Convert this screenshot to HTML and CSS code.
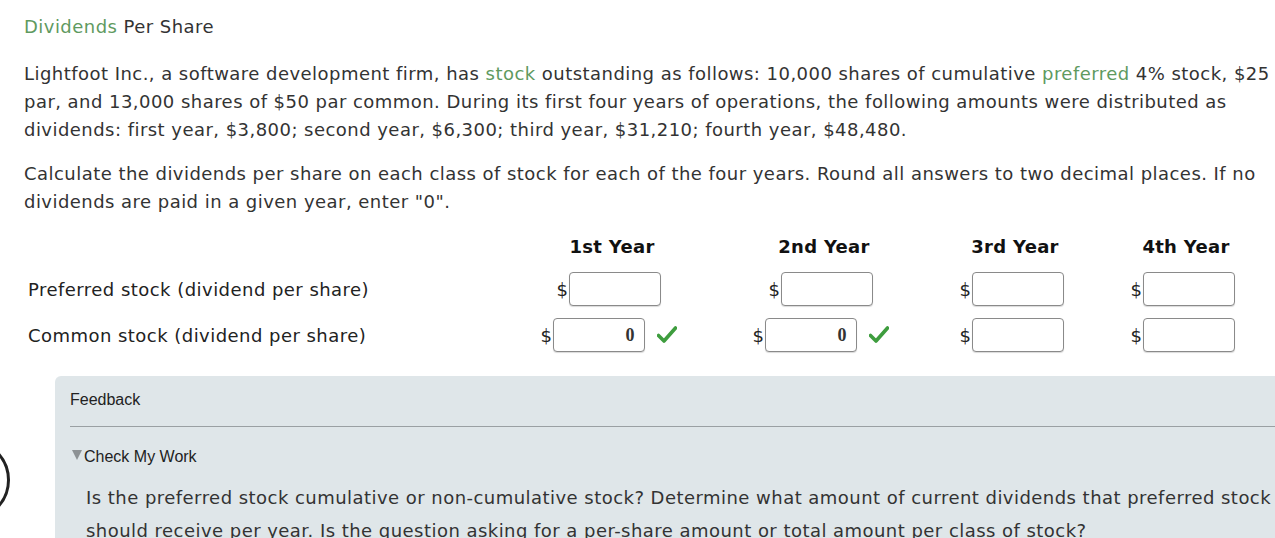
FILE: index.html
```html
<!DOCTYPE html>
<html>
<head>
<meta charset="utf-8">
<link rel="stylesheet" href="styles.css">
</head>
<body>
<div class="ring"></div>
<div class="page">
  <h1 class="title"><span class="term">Dividends</span> Per Share</h1>
  <p class="para">Lightfoot Inc., a software development firm, has <span class="term">stock</span> outstanding as follows: 10,000 shares of cumulative <span class="term">preferred</span> 4% stock, $25 par, and 13,000 shares of $50 par common. During its first four years of operations, the following amounts were distributed as dividends: first year, $3,800; second year, $6,300; third year, $31,210; fourth year, $48,480.</p>
  <p class="para">Calculate the dividends per share on each class of stock for each of the four years. Round all answers to two decimal places. If no dividends are paid in a given year, enter "0".</p>

  <div class="grid">
    <div class="cell head-label"></div>
    <div class="cell head c1">1st Year</div>
    <div class="cell head c2">2nd Year</div>
    <div class="cell head c3">3rd Year</div>
    <div class="cell head c4">4th Year</div>

    <div class="cell label">Preferred stock (dividend per share)</div>
    <div class="cell val c1"><span class="dollar">$</span><span class="box"></span></div>
    <div class="cell val c2"><span class="dollar">$</span><span class="box"></span></div>
    <div class="cell val c3"><span class="dollar">$</span><span class="box"></span></div>
    <div class="cell val c4"><span class="dollar">$</span><span class="box"></span></div>

    <div class="cell label">Common stock (dividend per share)</div>
    <div class="cell val c1"><span class="dollar">$</span><span class="box filled">0</span><svg class="check" viewBox="0 0 20 18" width="20" height="18"><path d="M1.5 9.5 L7 15 L18.5 2" fill="none" stroke="#3e9d3e" stroke-width="3.6" stroke-linecap="round" stroke-linejoin="round"/></svg></div>
    <div class="cell val c2"><span class="dollar">$</span><span class="box filled">0</span><svg class="check" viewBox="0 0 20 18" width="20" height="18"><path d="M1.5 9.5 L7 15 L18.5 2" fill="none" stroke="#3e9d3e" stroke-width="3.6" stroke-linecap="round" stroke-linejoin="round"/></svg></div>
    <div class="cell val c3"><span class="dollar">$</span><span class="box"></span></div>
    <div class="cell val c4"><span class="dollar">$</span><span class="box"></span></div>
  </div>

  <div class="feedback">
    <div class="fb-head">
      <span class="fb-title">Feedback</span>
      <span class="tri tri-right"></span>
    </div>
    <div class="fb-body">
      <div class="cmw"><span class="tri tri-small"></span>Check My Work</div>
      <p class="hint">Is the preferred stock cumulative or non-cumulative stock? Determine what amount of current dividends that preferred stock should receive per year. Is the question asking for a per-share amount or total amount per class of stock?</p>
    </div>
  </div>
</div>
</body>
</html>
```

FILE: styles.css
```css
html, body {
  margin: 0;
  padding: 0;
  background: #ffffff;
  overflow: hidden;
}
body {
  width: 1275px;
  height: 538px;
  position: relative;
  font-family: "DejaVu Sans", Verdana, sans-serif;
  color: #333333;
  letter-spacing: 0.46px;
}
.page {
  width: 1290px;
  padding: 14px 0 0 24px;
}
.title {
  margin: 0;
  font-size: 18px;
  font-weight: normal;
  line-height: 26px;
  color: #333;
}
.term {
  color: #5f9a5f;
}
.para {
  margin: 20px 0 0 0;
  font-size: 18px;
  line-height: 28px;
  width: 1256px;
}
.para + .para {
  margin-top: 16px;
}
.grid {
  display: grid;
  grid-template-columns: 482px 212px 212px 170px 172px;
  grid-template-rows: 45px 46px 46px;
  margin-top: 5px;
  align-items: center;
}
.cell {
  display: flex;
  align-items: center;
  justify-content: center;
}
.val {
  padding-right: 6px;
}
.head {
  font-weight: bold;
  font-size: 18px;
  color: #111;
  letter-spacing: 0.3px;
  padding-top: 5px;
}
.label {
  justify-content: flex-start;
  padding-left: 4px;
  font-size: 18px;
  color: #222;
}
.dollar {
  font-size: 18px;
  color: #222;
  margin-right: 1px;
}
.box {
  display: inline-flex;
  align-items: center;
  justify-content: flex-end;
  box-sizing: border-box;
  width: 92px;
  height: 34px;
  border: 1px solid #8a8a8a;
  border-radius: 4px;
  background: #fff;
  box-shadow: 0 1px 1px rgba(0,0,0,0.15);
  font-family: "Liberation Serif", "Times New Roman", serif;
  font-weight: bold;
  font-size: 18px;
  color: #333;
  padding-right: 10px;
  letter-spacing: 0;
}
.check {
  margin-left: 12px;
}
.feedback {
  margin: 18px 0 0 31px;
  background: #dfe6e9;
  border-top-left-radius: 6px;
  height: 200px;
  padding: 0 0 0 15px;
  font-family: "Liberation Sans", Arial, sans-serif;
  letter-spacing: 0;
}
.fb-head {
  display: flex;
  align-items: center;
  justify-content: space-between;
  height: 50px;
  border-bottom: 1px solid #9aa0a3;
  padding-right: 27px;
}
.fb-title {
  font-size: 16px;
  color: #222;
  margin-top: -2px;
}
.tri {
  display: inline-block;
  width: 0;
  height: 0;
  border-left: 6px solid transparent;
  border-right: 6px solid transparent;
  border-top: 9px solid #888e91;
}
.tri-right {
  margin-top: -12px;
  margin-right: -20px;
}
.tri-small {
  border-left-width: 5px;
  border-right-width: 5px;
  border-top-width: 10px;
  margin-right: 2px;
  margin-bottom: 4px;
  border-top-color: #8d9295;
}
.fb-body {
  padding-top: 20px;
}
.cmw {
  font-size: 16px;
  color: #222;
  display: flex;
  align-items: center;
  padding-left: 2px;
  line-height: 20px;
}
.hint {
  margin: 14px 0 0 16px;
  font-family: "DejaVu Sans", Verdana, sans-serif;
  letter-spacing: 0.46px;
  font-size: 18px;
  line-height: 33px;
  color: #333;
  width: 1192px;
}
.ring {
  position: absolute;
  left: -72px;
  top: 439px;
  width: 76px;
  height: 76px;
  border: 3px solid #222;
  border-radius: 50%;
}
```
